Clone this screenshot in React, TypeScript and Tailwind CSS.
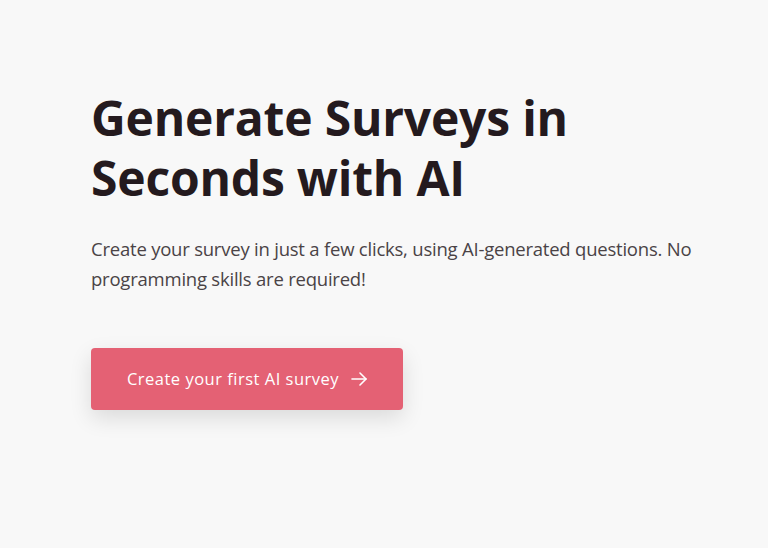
import React from 'react';

const App: React.FC = () => {
  return (
    <div
      className="min-h-[548px] w-full bg-[#f8f8f8] pl-[91px] pr-[20px] pt-[88px]"
      style={{ fontFamily: '"Open Sans", "Noto Sans", sans-serif' }}
    >
      <div className="max-w-[625px]">
        {/* Hero heading */}
        <h1 className="text-[48px] font-bold leading-[60px] tracking-[-0.2px] text-[#241a1e]">
          Generate Surveys in Seconds with AI
        </h1>

        <p className="mt-[26px] text-[18.5px] leading-[30px] tracking-[-0.22px] text-[#4a4346]">
          Create your survey in just a few clicks, using AI-generated questions. No programming skills are required!
        </p>

        <button className="mt-[54px] flex h-[62px] w-[312px] items-center justify-center gap-3 rounded-[4px] bg-[#e46174] text-[16.5px] tracking-[0.5px] text-white shadow-[0_8px_22px_rgba(0,0,0,0.12)]">
          Create your first AI survey
          <svg width="16" height="14" viewBox="0 0 16 14" fill="none" stroke="currentColor" strokeWidth="1.6" strokeLinecap="round" strokeLinejoin="round">
            <path d="M1 7h14" />
            <path d="M9 1l6 6-6 6" />
          </svg>
        </button>
      </div>
    </div>
  );
};

export default App;
